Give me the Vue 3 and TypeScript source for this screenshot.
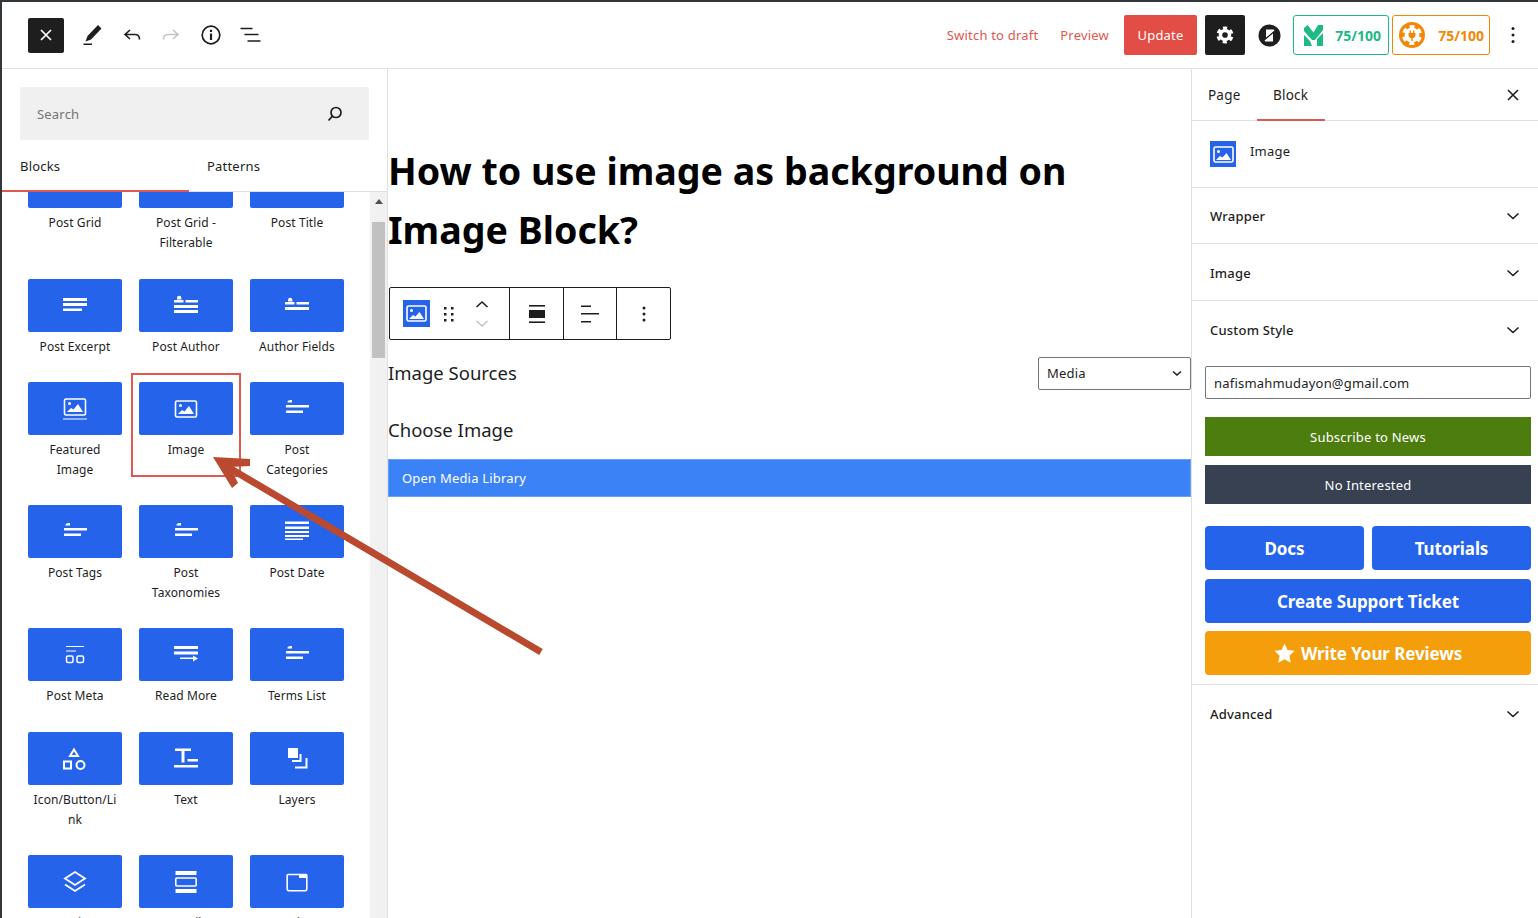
<script setup lang="ts">
/**
 * Block editor screen with inserter, canvas and settings panel
 */

interface Tile {
  label: string
  icon: string
}

const termIcon = 'M2.500 5c0-1.500 2-2 4.500-2v2.500H2.500zM1 8h23v2.500H1zM1 13.500h17V16H1z'

const tiles: Tile[] = [
  { label: 'Post Grid', icon: '' },
  { label: 'Post Grid - Filterable', icon: '' },
  { label: 'Post Title', icon: '' },
  { label: 'Post Excerpt', icon: 'M0 4h24v3H0zM0 9h24v3H0zM0 14.500h19V17H0z' },
  { label: 'Post Author', icon: 'M3 4a2.200 2.200 0 0 1 4.400 0v1.500H3zM0 6h9.500v2.500H0zM11.500 6H24v2.500H11.500zM0 11h24v3H0zM0 16h24v3H0z' },
  { label: 'Author Fields', icon: 'M3 6a2.200 2.200 0 0 1 4.400 0v1.500H3zM0 8h9.500v2.500H0zM11.500 8H24v2.500H11.500zM0 13h24v3H0z' },
  { label: 'Featured Image', icon: 'img-feat' },
  { label: 'Image', icon: 'img' },
  { label: 'Post Categories', icon: termIcon },
  { label: 'Post Tags', icon: termIcon },
  { label: 'Post Taxonomies', icon: termIcon },
  { label: 'Post Date', icon: 'M0 1.500h24V4H0zM0 6.500h24V9H0zM0 11h24v2H0zM0 15h24v2H0zM0 18.500h18v1.500H0z' },
  { label: 'Post Meta', icon: 'meta' },
  { label: 'Read More', icon: 'M0 3h24v3H0zM0 8.500h24v3H0zM6 14.500h13.500V16H6zM19 12.500l5 3-5 3z' },
  { label: 'Terms List', icon: termIcon },
  { label: 'Icon/Button/Link', icon: 'shapes' },
  { label: 'Text', icon: 'M1 1.500h16V4h-6.500v11.500H7.500V4H1zM13.500 12H24v2.500H13.500zM0 18h24v2.500H0z' },
  { label: 'Layers', icon: 'layers' },
  { label: 'Section', icon: 'stack' },
  { label: 'Scroll', icon: 'container' },
  { label: 'Tabs', icon: 'tabs' },
]

const panels = ['Wrapper', 'Image', 'Custom Style']
</script>

<template>
  <div class="screen">
    <header class="topbar">
      <div class="topbar__left">
        <button class="close-btn">
          <svg width="14" height="14" viewBox="0 0 14 14"><path d="M2 2l10 10M12 2L2 12" stroke="#fff" stroke-width="1.700" /></svg>
        </button>
        <svg class="tool" width="24" height="24" viewBox="0 0 24 24"><path d="M21.500 5.500 18 2 7.500 13 5.500 18.500 11 16.500zM3.500 20.500H12V22H3.500z" fill="#1e1e1e" /></svg>
        <svg class="tool" width="24" height="24" viewBox="0 0 24 24" fill="none" stroke="#1e1e1e" stroke-width="1.600"><path d="M10 7l-5 4.500 5 4.500M5.500 11.500H15c3 0 4.500 1.800 4.500 5" /></svg>
        <svg class="tool" width="24" height="24" viewBox="0 0 24 24" fill="none" stroke="#c4c4c4" stroke-width="1.600"><path d="M14 7l5 4.500-5 4.500M18.500 11.500H9c-3 0-4.500 1.800-4.500 5" /></svg>
        <svg class="tool" width="24" height="24" viewBox="0 0 24 24" fill="none" stroke="#1e1e1e"><circle cx="12" cy="12" r="8.800" stroke-width="1.700" /><path d="M12 10.500V17" stroke-width="2.200" /><path d="M12 6.800V9" stroke-width="2.200" /></svg>
        <svg class="tool" width="24" height="24" viewBox="0 0 24 24" fill="none" stroke="#1e1e1e" stroke-width="1.700"><path d="M1.500 5.500h12M5.500 11.500h14M8.500 18h13" /></svg>
      </div>
      <div class="topbar__right">
        <a class="link link--draft">Switch to draft</a>
        <a class="link link--preview">Preview</a>
        <button class="update-btn">Update</button>
        <button class="gear-btn">
          <svg width="20" height="20" viewBox="0 0 24 24">
            <circle cx="12" cy="12" r="7.500" fill="#fff" />
            <circle cx="12" cy="12" r="8.500" fill="none" stroke="#fff" stroke-width="3.500" stroke-dasharray="4.900 4" transform="rotate(-106 12 12)" />
            <circle cx="12" cy="12" r="3.400" fill="#1e1e1e" />
          </svg>
        </button>
        <svg class="zlogo" width="23" height="23" viewBox="0 0 23 23">
          <circle cx="11.500" cy="11.500" r="11" fill="#1e1e1e" />
          <path d="M8 5.500h7.500c.8 0 1 .8.6 1.300L8 13.500z" fill="#fff" />
          <path d="M15 9.500v8H7.500c-.8 0-1-.8-.6-1.300z" fill="#fff" />
          <path d="M8 12.800 15.500 6.500" stroke="#fff" stroke-width="1" />
        </svg>
        <div class="score score--green">
          <svg width="19" height="21" viewBox="0 0 19 21" fill="#1fb986">
            <path d="M0 3 3.500 0 9.500 7.500 14 0h5v5l-8 10H8L0 6z" />
            <path d="M0 10l6 6 2 5H0zM19 8v13h-6v-7z" />
          </svg>
          <span>75/100</span>
        </div>
        <div class="score score--orange">
          <svg width="26" height="26" viewBox="0 0 26 26">
            <circle cx="13" cy="13" r="13" fill="#f28705" />
            <circle cx="13" cy="13" r="7.500" fill="#fff" />
            <circle cx="13" cy="13" r="8.500" fill="none" stroke="#fff" stroke-width="3" stroke-dasharray="4.900 4" transform="rotate(-106 13 13)" />
            <path d="M10.700 8.500h1.300v2.500h2V8.500h1.300V11h1.200v2c0 1.700-1.200 3-2.800 3.200V19h-1.400v-2.800c-1.600-.2-2.800-1.500-2.800-3.200v-2h1.200z" fill="#f28705" />
          </svg>
          <span>75/100</span>
        </div>
        <svg class="tool kebab" width="24" height="24" viewBox="0 0 24 24" fill="#1e1e1e"><circle cx="12" cy="5.500" r="1.500" /><circle cx="12" cy="12" r="1.500" /><circle cx="12" cy="18.500" r="1.500" /></svg>
      </div>
    </header>

    <div class="body">
      <aside class="inserter">
        <div class="inserter__head">
          <div class="search">
            <span>Search</span>
            <svg width="20" height="20" viewBox="0 0 20 20" fill="none" stroke="#1e1e1e" stroke-width="1.700"><circle cx="11" cy="8.500" r="5" /><path d="M7.500 12.200 3.500 16.500" /></svg>
          </div>
          <div class="tabs">
            <span class="tabs__item tabs__item--active">Blocks</span>
            <span class="tabs__item">Patterns</span>
          </div>
        </div>
        <div class="list">
          <div class="grid">
            <div v-for="tile in tiles" :key="tile.label" class="tile" :class="{ 'tile--hit': tile.label === 'Image' }">
              <div class="tile__box">
                <svg v-if="tile.icon === 'img' || tile.icon === 'img-feat'" width="24" height="24" viewBox="0 0 24 24">
                  <rect x="1.500" :y="tile.icon === 'img' ? 4 : 2" width="21" height="16" rx="1.500" fill="none" stroke="#fff" stroke-width="1.600" />
                  <circle cx="6.500" :cy="tile.icon === 'img' ? 8.500 : 6.500" r="1.500" fill="#fff" />
                  <path :d="tile.icon === 'img' ? 'M4 17l4-4 2.500 1.500 4.500-5.500 5 8z' : 'M4 15l4-4 2.500 1.500 4.500-5.500 5 8z'" fill="#fff" />
                  <path v-if="tile.icon === 'img-feat'" d="M0 21.500h24v1H0z" fill="#fff" />
                </svg>
                <svg v-else-if="tile.icon === 'meta'" width="20" height="24" viewBox="0 0 20 24" fill="none" stroke="#fff">
                  <path d="M1 3.500h18M1 8h10" stroke-width="1.200" />
                  <rect x="1.500" y="13" width="6.500" height="6.500" rx="1.500" stroke-width="1.500" />
                  <rect x="12" y="13" width="6.500" height="6.500" rx="1.500" stroke-width="1.500" />
                </svg>
                <svg v-else-if="tile.icon === 'shapes'" width="24" height="24" viewBox="0 0 24 24" fill="none" stroke="#fff" stroke-width="2">
                  <path d="M11 2.500l4 6.500H7z" />
                  <rect x="1" y="14.500" width="7" height="7" />
                  <circle cx="17.500" cy="18" r="4" />
                </svg>
                <svg v-else-if="tile.icon === 'layers'" width="24" height="24" viewBox="0 0 24 24">
                  <rect x="3" y="1" width="10" height="10" fill="#fff" />
                  <path d="M15.500 7v7H7M21.500 11v9.500H10" fill="none" stroke="#fff" stroke-width="2" />
                </svg>
                <svg v-else-if="tile.icon === 'stack'" width="24" height="24" viewBox="0 0 24 24" fill="none" stroke="#fff" stroke-width="1.800">
                  <path d="M12 2 22 8.500 12 15 2 8.500z" />
                  <path d="M2 14.500 12 21 22 14.500" />
                </svg>
                <svg v-else-if="tile.icon === 'container'" width="24" height="24" viewBox="0 0 24 24">
                  <path d="M1.500 1h21v4h-21zM1.500 19h21v4h-21z" fill="#fff" />
                  <rect x="1.800" y="8" width="20.400" height="8" rx="1" fill="none" stroke="#fff" stroke-width="1.600" />
                </svg>
                <svg v-else-if="tile.icon === 'tabs'" width="22" height="20" viewBox="0 0 22 20">
                  <path d="M2 2.500h18a.8.8 0 0 1 .8.8v13.400a2 2 0 0 1-2 2H3.200a2 2 0 0 1-2-2V3.300a.8.8 0 0 1 .8-.8z" fill="none" stroke="#fff" stroke-width="1.600" />
                  <path d="M13 2h8v4h-8z" fill="#fff" />
                </svg>
                <svg v-else width="24" height="24" viewBox="0 0 24 24"><path :d="tile.icon" fill="#fff" /></svg>
              </div>
              <span class="tile__label">{{ tile.label }}</span>
            </div>
          </div>
          <div class="scrollbar">
            <span class="scrollbar__up"></span>
            <span class="scrollbar__thumb"></span>
          </div>
        </div>
      </aside>

      <main class="canvas">
        <h1 class="title">How to use image as background on Image Block?</h1>
        <div class="block-toolbar">
          <div class="block-toolbar__group block-toolbar__group--main">
            <span class="img-badge">
              <svg width="21" height="17" viewBox="0 0 21 17">
                <rect x="1" y="1" width="19" height="15" rx="1.500" fill="none" stroke="#fff" stroke-width="1.600" />
                <circle cx="5.500" cy="5.500" r="1.500" fill="#fff" />
                <path d="M3 14l4-4 2.500 1.500 4-4.500 4.500 7z" fill="#fff" />
              </svg>
            </span>
            <svg width="14" height="18" viewBox="0 0 14 18" fill="#1e1e1e"><rect x="2" y="2" width="2.500" height="2.500" /><rect x="9" y="2" width="2.500" height="2.500" /><rect x="2" y="8" width="2.500" height="2.500" /><rect x="9" y="8" width="2.500" height="2.500" /><rect x="2" y="14" width="2.500" height="2.500" /><rect x="9" y="14" width="2.500" height="2.500" /></svg>
            <div class="movers">
              <svg width="14" height="10" viewBox="0 0 14 10" fill="none" stroke="#1e1e1e" stroke-width="1.600"><path d="M1.500 8 7 3l5.500 5" /></svg>
              <svg width="14" height="10" viewBox="0 0 14 10" fill="none" stroke="#c4c4c4" stroke-width="1.600"><path d="M1.500 2 7 7l5.500-5" /></svg>
            </div>
          </div>
          <div class="block-toolbar__group block-toolbar__group--tool">
            <svg width="18" height="22" viewBox="0 0 18 22" fill="#1e1e1e"><rect x="1" y="2" width="16" height="1.600" /><rect x="1" y="7" width="16" height="8" /><rect x="1" y="18.400" width="16" height="1.600" /></svg>
          </div>
          <div class="block-toolbar__group block-toolbar__group--tool">
            <svg width="20" height="22" viewBox="0 0 20 22" fill="#1e1e1e"><rect x="1" y="2.500" width="10" height="1.500" /><rect x="1" y="10" width="18" height="1.500" /><rect x="1" y="18" width="10" height="1.500" /></svg>
          </div>
          <div class="block-toolbar__group block-toolbar__group--tool">
            <svg width="6" height="20" viewBox="0 0 6 20" fill="#1e1e1e"><circle cx="3" cy="4" r="1.500" /><circle cx="3" cy="10" r="1.500" /><circle cx="3" cy="16" r="1.500" /></svg>
          </div>
        </div>
        <div class="field-row">
          <span class="field-label">Image Sources</span>
          <div class="select">
            <span>Media</span>
            <svg width="12" height="12" viewBox="0 0 12 12" fill="none" stroke="#1e1e1e" stroke-width="1.500"><path d="M2 4.500 6 8l4-3.500" /></svg>
          </div>
        </div>
        <div class="field-label field-label--choose">Choose Image</div>
        <button class="media-btn">Open Media Library</button>
      </main>

      <aside class="settings">
        <div class="settings__tabs">
          <span class="settings__tab settings__tab--page">Page</span>
          <span class="settings__tab settings__tab--active">Block</span>
          <svg class="settings__close" width="14" height="14" viewBox="0 0 14 14"><path d="M2 2l10 10M12 2L2 12" stroke="#1e1e1e" stroke-width="1.600" /></svg>
        </div>
        <div class="block-card">
          <span class="img-badge img-badge--card">
            <svg width="21" height="17" viewBox="0 0 21 17">
              <rect x="1" y="1" width="19" height="15" rx="1.500" fill="none" stroke="#fff" stroke-width="1.600" />
              <circle cx="5.500" cy="5.500" r="1.500" fill="#fff" />
              <path d="M3 14l4-4 2.500 1.500 4-4.500 4.500 7z" fill="#fff" />
            </svg>
          </span>
          <span>Image</span>
        </div>
        <div v-for="(panel, i) in panels" :key="panel" class="panel" :class="{ 'panel--first': i === 0, 'panel--open': i === 2 }">
          <span>{{ panel }}</span>
          <svg width="14" height="14" viewBox="0 0 14 14" fill="none" stroke="#1e1e1e" stroke-width="1.600"><path d="M1.500 4.500 7 9.500l5.500-5" /></svg>
        </div>
        <div class="custom">
          <div class="email">nafismahmudayon@gmail.com</div>
          <button class="wide wide--green">Subscribe to News</button>
          <button class="wide wide--dark">No Interested</button>
          <div class="links">
            <a class="cta">Docs</a>
            <a class="cta">Tutorials</a>
            <a class="cta cta--full">Create Support Ticket</a>
            <a class="cta cta--full cta--amber">
              <svg width="21" height="20" viewBox="0 0 24 23"><path d="M12 .5l3.500 7.500 8 1-5.800 5.600 1.500 8.100L12 18.700l-7.200 4 1.500-8.100L.5 9l8-1z" fill="#fff" /></svg>
              Write Your Reviews
            </a>
          </div>
        </div>
        <div class="panel panel--last">
          <span>Advanced</span>
          <svg width="14" height="14" viewBox="0 0 14 14" fill="none" stroke="#1e1e1e" stroke-width="1.600"><path d="M1.500 4.500 7 9.500l5.500-5" /></svg>
        </div>
      </aside>
    </div>

    <!-- tutorial annotation drawn over the screenshot -->
    <svg class="arrow" width="560" height="670" viewBox="0 0 560 670" fill="none">
      <path d="M541 652 226 466" stroke="#b94a30" stroke-width="7" />
      <path d="M213 457 250 459 250 466 230 467 238 483 232 488z" fill="#b94a30" />
    </svg>
    <span class="edge-mark edge-mark--one"></span>
    <span class="edge-mark edge-mark--two"></span>
  </div>
</template>

<style scoped>
.screen {
  position: relative;
  display: flex;
  flex-direction: column;
  width: 1538px;
  height: 918px;
  overflow: hidden;
  box-sizing: border-box;
  border-top: 2px solid #32373c;
  border-left: 2px solid #32373c;
  background: #fff;
  color: #1e1e1e;
  font-family: "Noto Sans", "Open Sans", sans-serif;
  font-size: 13px;
  letter-spacing: 0.2px;
}

button {
  border: 0;
  padding: 0;
  font-family: inherit;
  letter-spacing: inherit;
  cursor: pointer;
}

svg {
  display: block;
  flex: none;
}

.topbar {
  display: flex;
  align-items: center;
  justify-content: space-between;
  flex: none;
  height: 67px;
  box-sizing: border-box;
  border-bottom: 1px solid #e0e0e0;
  padding: 0 13px 0 26px;
}

.topbar__left {
  display: flex;
  align-items: center;
  gap: 15.750px;
}

.close-btn {
  display: flex;
  align-items: center;
  justify-content: center;
  width: 36px;
  height: 35px;
  border-radius: 2px;
  background: #1e1e1e;
}

.topbar__right {
  display: flex;
  align-items: center;
}

.link {
  font-size: 13px;
  color: #e2574f;
}

.link--draft {
  margin-right: 22px;
}

.link--preview {
  margin-right: 15px;
}

.update-btn {
  width: 73px;
  height: 40px;
  margin-right: 8px;
  border-radius: 2px;
  background: #e24d45;
  color: #fff;
  font-size: 13px;
}

.gear-btn {
  display: flex;
  align-items: center;
  justify-content: center;
  width: 40px;
  height: 40px;
  margin-right: 13px;
  border-radius: 2px;
  background: #1e1e1e;
}

.zlogo {
  margin-right: 12px;
}

.score {
  display: flex;
  align-items: center;
  justify-content: space-between;
  height: 40px;
  box-sizing: border-box;
  border-radius: 3px;
  background: #fff;
  font-size: 14px;
  font-weight: 700;
  letter-spacing: 0;
}

.score--green {
  width: 96px;
  margin-right: 3px;
  padding: 0 7px 0 10px;
  border: 1px solid #1fb986;
  color: #1fb986;
}

.score--orange {
  width: 98px;
  margin-right: 11px;
  padding: 0 5px 0 6px;
  border: 1px solid #f28705;
  color: #f28705;
}

.body {
  display: flex;
  flex: 1;
  min-height: 0;
}

.inserter {
  display: flex;
  flex-direction: column;
  flex: none;
  width: 386px;
  box-sizing: border-box;
  border-right: 1px solid #e0e0e0;
}

.inserter__head {
  flex: none;
  padding-top: 18px;
}

.search {
  display: flex;
  align-items: center;
  justify-content: space-between;
  height: 53px;
  margin: 0 18px;
  padding: 0 24px 0 17px;
  border-radius: 2px;
  background: #f0f0f0;
  color: #757575;
  font-size: 13px;
}

.tabs {
  display: grid;
  grid-template-columns: 187px 1fr;
  height: 52px;
  box-sizing: border-box;
  border-bottom: 1px solid #e0e0e0;
}

.tabs__item {
  display: flex;
  align-items: center;
  padding-left: 18px;
  font-size: 13px;
  line-height: 50px;
}

.tabs__item--active {
  box-shadow: inset 0 -2px 0 #e2574f;
  margin-bottom: -1px;
}

.list {
  display: flex;
  flex: 1;
  min-height: 0;
  overflow: hidden;
}

.grid {
  display: grid;
  grid-template-columns: repeat(3, 94px);
  grid-auto-rows: min-content;
  column-gap: 17px;
  flex: none;
  width: 368px;
  box-sizing: border-box;
  margin-top: -37px;
  padding-left: 26px;
}

.tile {
  position: relative;
  padding-bottom: 25px;
  text-align: center;
}

.tile:nth-child(-n + 3),
.tile:nth-child(n + 13):nth-child(-n + 15) {
  padding-bottom: 26px;
}

.tile__box {
  display: flex;
  align-items: center;
  justify-content: center;
  height: 53px;
  border-radius: 2px;
  background: #2563eb;
}

.tile__label {
  display: block;
  margin-top: 5px;
  padding: 0 4px;
  font-size: 12px;
  letter-spacing: 0.1px;
  line-height: 20px;
  overflow-wrap: anywhere;
}

.tile--hit::after {
  content: "";
  position: absolute;
  top: -9px;
  left: -8px;
  right: -8px;
  height: 104px;
  box-sizing: border-box;
  border: 2px solid #e2574f;
}

.scrollbar {
  position: relative;
  flex: 1;
  background: #f1f1f1;
}

.scrollbar__up {
  position: absolute;
  top: 7px;
  left: 5px;
  border: 4px solid transparent;
  border-top: 0;
  border-bottom: 5px solid #505050;
}

.scrollbar__thumb {
  position: absolute;
  top: 30px;
  left: 2px;
  width: 13px;
  height: 136px;
  background: #c1c1c1;
}

.canvas {
  flex: none;
  width: 803px;
  box-sizing: border-box;
}

.title {
  width: 720px;
  margin: 72px 0 28px;
  color: #000;
  font-size: 37.600px;
  font-weight: 700;
  letter-spacing: 0;
  line-height: 59px;
}

.block-toolbar {
  display: flex;
  width: 282px;
  height: 53px;
  margin-left: 1px;
  box-sizing: border-box;
  border: 1px solid #1e1e1e;
  border-radius: 2px;
}

.block-toolbar__group {
  display: flex;
  align-items: center;
  justify-content: center;
  box-sizing: border-box;
  border-right: 1px solid #1e1e1e;
}

.block-toolbar__group:last-child {
  border-right: 0;
}

.block-toolbar__group--main {
  justify-content: flex-start;
  width: 120px;
  padding-left: 13px;
  gap: 12px;
}

.block-toolbar__group--tool {
  width: 53px;
}

.block-toolbar__group--main + .block-toolbar__group--tool {
  width: 54px;
}

.img-badge {
  display: flex;
  align-items: center;
  justify-content: center;
  width: 27px;
  height: 27px;
  background: #2563eb;
}

.img-badge--card {
  height: 26px;
  width: 26px;
}

.movers {
  display: flex;
  flex-direction: column;
  gap: 10px;
  margin-left: 7px;
}

.field-row {
  display: flex;
  align-items: center;
  justify-content: space-between;
  margin-top: 17px;
}

.field-label {
  padding-bottom: 2px;
  font-size: 18.500px;
  letter-spacing: 0;
  line-height: 31px;
}

.field-label--choose {
  margin-top: 24px;
}

.select {
  display: flex;
  align-items: center;
  justify-content: space-between;
  width: 153px;
  height: 33px;
  box-sizing: border-box;
  padding: 0 7px 2px 8px;
  border: 1px solid #757575;
  border-radius: 2px;
  font-size: 13px;
}

.media-btn {
  display: block;
  width: 100%;
  height: 38px;
  margin-top: 12px;
  box-sizing: border-box;
  padding-left: 13px;
  border: 1px solid #60a5fa;
  background: #3b82f6;
  color: #fff;
  font-size: 13px;
  text-align: left;
}

.settings {
  flex: none;
  width: 347px;
  box-sizing: border-box;
  border-left: 1px solid #e0e0e0;
}

.settings__tabs {
  display: flex;
  align-items: center;
  height: 52px;
  box-sizing: border-box;
  border-bottom: 1px solid #e0e0e0;
}

.settings__tab {
  display: flex;
  align-items: center;
  height: 52px;
  padding: 0 16px;
  font-size: 13.500px;
}

.settings__tab--page {
  width: 65px;
  box-sizing: border-box;
}

.settings__tab--active {
  width: 68px;
  box-sizing: border-box;
  box-shadow: inset 0 -2px 0 #e2574f;
}

.settings__close {
  margin-left: auto;
  margin-right: 18px;
}

.block-card {
  display: flex;
  align-items: flex-start;
  gap: 14px;
  height: 67px;
  box-sizing: border-box;
  padding: 20px 0 0 18px;
  border-bottom: 1px solid #e0e0e0;
  line-height: 20px;
  font-size: 13px;
}

.panel {
  display: flex;
  align-items: center;
  justify-content: space-between;
  height: 57px;
  box-sizing: border-box;
  padding: 1px 18px 0;
  border-bottom: 1px solid #e0e0e0;
  font-size: 13px;
  font-weight: 500;
}

.panel--first {
  height: 56px;
  padding-top: 0;
}

.panel--open {
  border-bottom: 0;
  height: 58px;
  padding-top: 0;
}

.panel--last {
  height: 59px;
  padding: 0 18px 2px;
  border-bottom: 0;
}

.custom {
  padding: 7px 7px 9px 13px;
  border-bottom: 1px solid #e0e0e0;
}

.email {
  display: flex;
  align-items: center;
  height: 33px;
  box-sizing: border-box;
  padding-left: 8px;
  border: 1px solid #757575;
  border-radius: 2px;
  font-size: 13px;
}

.wide {
  display: block;
  width: 100%;
  height: 39px;
  color: #fff;
  font-size: 13px;
}

.wide--green {
  margin-top: 18px;
  background: #4d7c0f;
}

.wide--dark {
  margin-top: 9px;
  background: #374151;
}

.links {
  display: grid;
  grid-template-columns: 1fr 1fr;
  gap: 9px 8px;
  margin-top: 22px;
}

.cta {
  display: flex;
  align-items: center;
  justify-content: center;
  gap: 6px;
  height: 44px;
  border-radius: 4px;
  background: #2563eb;
  color: #fff;
  font-size: 17px;
  font-weight: 700;
  letter-spacing: -0.1px;
}

.cta--full {
  grid-column: 1 / -1;
}

.cta--amber {
  margin-top: -1px;
  background: #f59e0b;
}

.arrow {
  position: absolute;
  top: -2px;
  left: -2px;
  pointer-events: none;
}

.edge-mark {
  position: absolute;
  left: -2px;
  width: 2px;
  background: #e2574f;
}

.edge-mark--one {
  top: 214px;
  height: 10px;
}

.edge-mark--two {
  top: 238px;
  height: 13px;
}
</style>

<style>
html,
body {
  margin: 0;
  background: #fff;
}
</style>
